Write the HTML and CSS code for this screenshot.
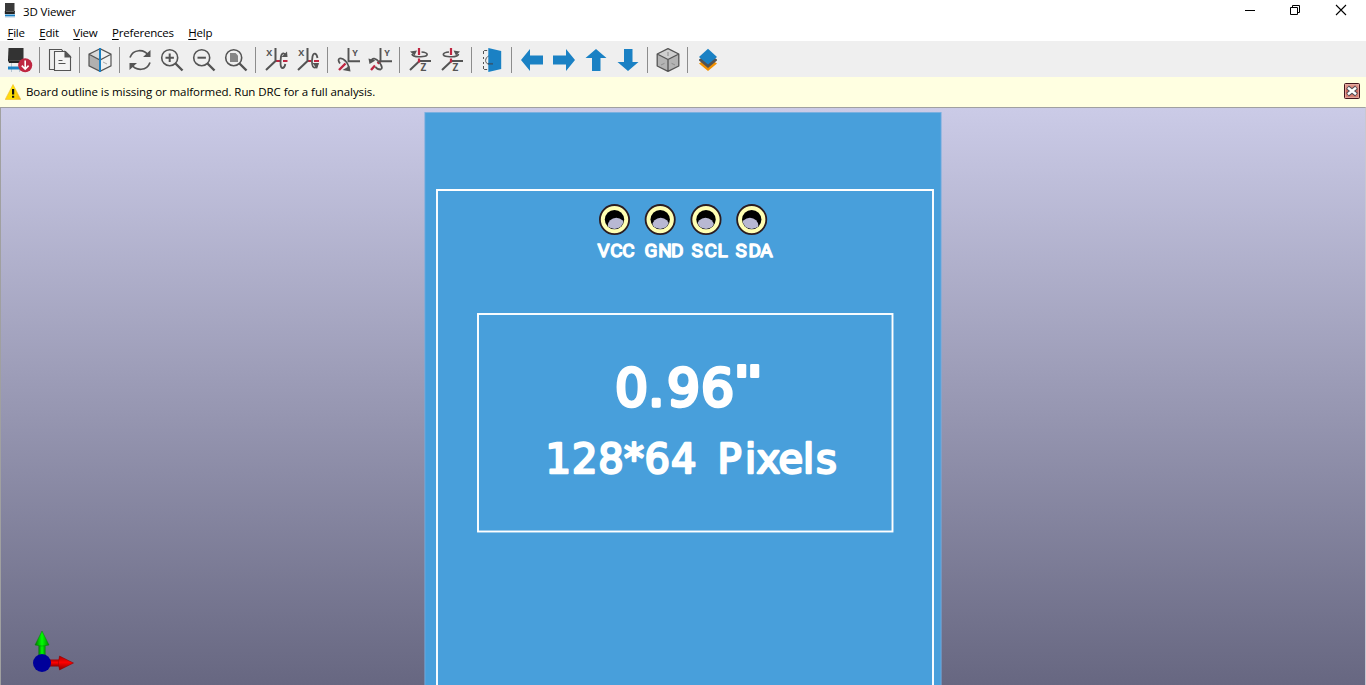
FILE: index.html
```html
<!DOCTYPE html>
<html lang="en">
<head>
<meta charset="utf-8">
<title>3D Viewer</title>
<link rel="stylesheet" href="styles.css">
</head>
<body>
<header class="titlebar">
  <svg class="app-icon" width="12" height="16" viewBox="0 0 12 16"><path d="M1 1h9.500v9H1z" fill="#3a3a3a"/><path d="M.8 9h10v3H.8z" fill="#222"/><path d="M2 9.500h8" stroke="#888" stroke-width=".6"/><path d="M1 12.500h10v2H1z" fill="#1a81c4"/><path d="M1 15h10" stroke="#b9cfe0"/></svg>
  <h1 class="title">3D Viewer</h1>
  <div class="controls">
    <svg width="12" height="12" viewBox="0 0 12 12"><path d="M1 6.500h10" stroke="#000"/></svg>
    <svg width="12" height="12" viewBox="0 0 12 12" fill="none" stroke="#000"><path d="M1.500 3.500h7v7h-7zM3.500 3V1.500h7v7H9"/></svg>
    <svg width="12" height="12" viewBox="0 0 12 12"><path d="M1 1l10 10M11 1L1 11" stroke="#000" stroke-width="1.100"/></svg>
  </div>
</header>
<nav class="menu">
  <span><u>F</u>ile</span><span><u>E</u>dit</span><span><u>V</u>iew</span><span><u>P</u>references</span><span><u>H</u>elp</span>
</nav>
<div class="toolbar">
  <svg class="tool" viewBox="0 0 24 24"><path d="M.5 0h15v11H0z" fill="#333"/><path d="M0 11h16v1.500l-1 2.500H1l-1-2.500z" fill="#222"/><path d="M1 12.200h14" stroke="#777" stroke-width=".7"/><path d="M3.500 15v9M11.500 15v9" stroke="#b7c5d0"/><path d="M0 18.500h16v3H0z" fill="#1a81c4"/><circle cx="17.200" cy="17.200" r="7" fill="#bf2641"/><path d="M17.200 12.500v8M13.800 17.600l3.400 3.600 3.400-3.600" fill="none" stroke="#fff" stroke-width="1.600"/></svg>
  <i class="sep"></i>
  <svg class="tool" viewBox="0 0 24 24" fill="none" stroke="#545454" stroke-width="1.100"><path d="M6.500 21.500h-5v-20h12l2 2.500"/><path d="M6.500 3.500h11l5 5v14h-16z" fill="#f4f4f4"/><path d="M17 3.500v5.500h5.500z" fill="#545454"/><path d="M10.500 12.500h4M10.500 15.500h7" stroke-width="1.200"/></svg>
  <i class="sep"></i>
  <svg class="tool" viewBox="0 0 24 24"><path d="M12 .7L1 6.200v11.600l11 5.500V12z" fill="#b0b0b0"/><path d="M12 .7L1 6.200 12 12z" fill="#d9d9d9"/><path d="M12 .7L23 6.200v11.600l-11 5.500z" fill="#f1f1f1"/><path d="M12 .7L1 6.200v11.600l11 5.500 11-5.500V6.200zM1 6.200L12 12l11-5.800" fill="none" stroke="#545454" stroke-width="1.200"/><path d="M15 14l4 2" stroke="#aaa"/><path d="M12 0v24" stroke="#1a81c4" stroke-width="2"/></svg>
  <i class="sep"></i>
  <svg class="tool" viewBox="0 0 24 24" fill="none" stroke="#545454" stroke-width="1.700"><path d="M2 9.500C5 1 16 .5 21 8M22 14.500C19 23 8 23.500 3 16"/><path d="M22.500 2v7H15z M1.500 22v-7H9z" fill="#545454" stroke="none"/></svg>
  <svg class="tool" viewBox="0 0 24 24" fill="none" stroke="#545454" stroke-width="1.600"><circle cx="9.700" cy="9.700" r="8"/><path d="M15.500 15.500l7 7" stroke-width="2.400"/><path d="M5.500 9.700h8.400M9.700 5.500v8.400" stroke-width="2"/></svg>
  <svg class="tool" viewBox="0 0 24 24" fill="none" stroke="#545454" stroke-width="1.600"><circle cx="9.700" cy="9.700" r="8"/><path d="M15.500 15.500l7 7" stroke-width="2.400"/><path d="M5.500 9.700h8.400" stroke-width="2"/></svg>
  <svg class="tool" viewBox="0 0 24 24" fill="none" stroke="#545454" stroke-width="1.600"><circle cx="9.700" cy="9.700" r="8"/><path d="M15.500 15.500l7 7" stroke-width="2.400"/><path d="M6 5h5.500l2.500 2.500V14H6z" fill="#858585" stroke="none"/></svg>
  <i class="sep"></i>
  <svg class="tool" viewBox="0 0 24 24" fill="none"><path d="M12 13h4M19 13h4.500" stroke="#bf2641" stroke-width="2"/><path d="M11.500 0v13L2 22" stroke="#545454" stroke-width="2"/><path d="M21.500 7.500c-1-3.500-4-2.500-4.500 1-1 7-.5 11.500 1.500 11.500 1.500 0 2.500-2 2.800-4" stroke="#545454" stroke-width="1.800"/><path d="M17.500 9h6L23 3.500z" fill="#545454"/><text class="axis" x="2.300" y="8.300">X</text></svg>
  <svg class="tool" viewBox="0 0 24 24" fill="none"><path d="M12 13h3.500M18 13h5" stroke="#bf2641" stroke-width="2"/><path d="M11.500 0v13L2 22" stroke="#545454" stroke-width="2"/><path d="M21.500 10c-1-5-4-6-5-1.500-1 6-.5 10 1.500 11 2 .5 3-1 3.500-4" stroke="#545454" stroke-width="1.800"/><path d="M16.500 15h6.500l-2 6z" fill="#545454"/><text class="axis" x="2.300" y="8.300">X</text></svg>
  <i class="sep"></i>
  <svg class="tool" viewBox="0 0 24 24" fill="none"><path d="M9.500 15.500L3 22" stroke="#bf2641" stroke-width="2.400"/><path d="M12.500 0v13.200H24" stroke="#545454" stroke-width="1.900"/><path d="M4 15.500C0 10 5 8.500 9.500 13c3.500 4 3.500 7 2 8.500" stroke="#545454" stroke-width="1.800"/><path d="M6.500 22l7-4 1 5.500z" fill="#545454"/><text class="axis" x="16.200" y="8.300">Y</text></svg>
  <svg class="tool" viewBox="0 0 24 24" fill="none"><path d="M12.500 13L9.500 15.500M7 17.500L3 22" stroke="#bf2641" stroke-width="2.400"/><path d="M12.500 0v13.200H24" stroke="#545454" stroke-width="1.900"/><path d="M3 14c1-5 5-4 8.500.5 3 4 3 6.500 1 7-2 0-4-1-5-2.500" stroke="#545454" stroke-width="1.800"/><path d="M.5 10.500l7 2-6 3.500z" fill="#545454"/><text class="axis" x="16.200" y="8.300">Y</text></svg>
  <i class="sep"></i>
  <svg class="tool" viewBox="0 0 24 24" fill="none"><path d="M2 22l9.500-9H23" stroke="#545454" stroke-width="2"/><path d="M11 0v7M11 10.500v4" stroke="#bf2641" stroke-width="2.200"/><path d="M13.500 4c7 .5 7.500 4 1.500 4.500-6 .6-10.500 0-11-2.500" stroke="#545454" stroke-width="1.700"/><path d="M2 3.500L9 2.500 6.500 7.500z" fill="#545454"/><text class="axis z" x="12.500" y="23">Z</text></svg>
  <svg class="tool" viewBox="0 0 24 24" fill="none"><path d="M2 22l9.500-9H23" stroke="#545454" stroke-width="2"/><path d="M11 0v7M11 10.500v4" stroke="#bf2641" stroke-width="2.200"/><path d="M9 4c-7 .5-7.500 4-1.500 4.500 6 .6 10.500 0 11-2.500" stroke="#545454" stroke-width="1.700"/><path d="M20 3.500L13.500 2.500 16 7.500z" fill="#545454"/><text class="axis z" x="12.500" y="23">Z</text></svg>
  <i class="sep"></i>
  <svg class="tool" viewBox="0 0 24 24" fill="none"><path d="M3.500 6V2.500h5M3.500 9v2M3.500 14v2M3.500 18v3.500h4" stroke="#545454" stroke-dasharray="3 1.200"/><path d="M9.500 7.500c-5 2-5 8-1 8.500" stroke="#545454"/><path d="M8.300 0l12.900 3v18L8.300 24z" fill="#1a81c4"/><path d="M8 15.800h5" stroke="#315a78" stroke-width="1.700"/></svg>
  <i class="sep"></i>
  <svg class="tool" viewBox="0 0 24 24"><path d="M1 12L10 1v6.500h13v9H10V23z" fill="#1a81c4"/></svg>
  <svg class="tool" viewBox="0 0 24 24"><path d="M23 12L14 1v6.500H1v9h13V23z" fill="#1a81c4"/></svg>
  <svg class="tool" viewBox="0 0 24 24"><path d="M12 1L1.500 10H8v13h8.500V10h6z" fill="#1a81c4"/></svg>
  <svg class="tool" viewBox="0 0 24 24"><path d="M12 23L1.500 14H8V1h8.500v13h6z" fill="#1a81c4"/></svg>
  <i class="sep"></i>
  <svg class="tool" viewBox="0 0 24 24" stroke-linejoin="round"><path d="M12 .7L1.200 6v12L12 23.300 22.800 18V6z" fill="#b4b4b4"/><path d="M12 .7L1.200 6 12 11.500 22.800 6z" fill="#cfcfcf"/><path d="M12 4v4M5 17l3.500-1.700M19 17l-3.500-1.700" stroke="#8c8c8c"/><path d="M12 .7L1.200 6v12L12 23.300 22.800 18V6zM1.200 6L12 11.500 22.800 6M12 11.500v11.800" fill="none" stroke="#545454" stroke-width="1.300"/></svg>
  <i class="sep"></i>
  <svg class="tool" viewBox="0 0 24 24"><path d="M3 15.500l9-6 9 6-9 7.500z" fill="#f29100"/><path d="M3 11.500l9-6 9 6v1L12 20l-9-7.500z" fill="#545454"/><path d="M12 .7L21 9l-9 7.500L3 9z" fill="#1a81c4"/></svg>
</div>
<div class="banner">
  <svg class="warn" width="16" height="16" viewBox="0 0 16 16"><defs><linearGradient id="wg" x1="0" x2="1"><stop offset="0" stop-color="#ffd21c"/><stop offset=".5" stop-color="#ffe600"/><stop offset="1" stop-color="#f6b112"/></linearGradient></defs><path d="M8 .5L15.800 15.500H.2z" fill="url(#wg)" stroke="#f1bc32" stroke-width=".6"/><path d="M7 5h2.200v5.500H7zM7 11.700h2.200v2.100H7z" fill="#111"/></svg>
  <span class="message">Board outline is missing or malformed. Run DRC for a full analysis.</span>
  <svg class="dismiss" width="16" height="16" viewBox="0 0 16 16"><defs><linearGradient id="cg" x1="0" y1="0" x2="0" y2="1"><stop offset="0" stop-color="#e6a79c"/><stop offset=".5" stop-color="#cf6257"/><stop offset="1" stop-color="#dc8d80"/></linearGradient></defs><rect x=".5" y=".5" width="15" height="15" rx="1" fill="url(#cg)" stroke="#43141c"/><rect x="1.500" y="1.500" width="13" height="13" fill="none" stroke="#e5b0a8" stroke-width=".7"/><path d="M3.500 4.300l9 7.400M12.500 4.300l-9 7.400" stroke="#4b4b55" stroke-width="4.400"/><path d="M4 4.700l8 6.600M12 4.700l-8 6.600" stroke="#fff" stroke-width="2.400"/></svg>
</div>
<main class="viewport">
  <svg class="scene" width="1364" height="577" viewBox="1 108 1364 577">
    <defs>
      <linearGradient id="sky" gradientUnits="userSpaceOnUse" x1="0" y1="108" x2="0" y2="685"><stop offset="0" stop-color="#cbcbe7"/><stop offset="1" stop-color="#676781"/></linearGradient>
      <linearGradient id="rg" x1="0" y1="0" x2="0" y2="1"><stop offset="0" stop-color="#a00"/><stop offset=".45" stop-color="#f00"/><stop offset="1" stop-color="#800"/></linearGradient>
      <linearGradient id="gg"><stop offset="0" stop-color="#070"/><stop offset=".5" stop-color="#0f0"/><stop offset="1" stop-color="#080"/></linearGradient>
      <clipPath id="hole"><circle r="9.300"/></clipPath>
      <g id="pad"><circle r="14.600" fill="#ffffb3" stroke="#2b1c20" stroke-width="1.800"/><circle r="9.700" fill="#000"/></g>
    </defs>
    <rect x="1" y="108" width="1364" height="577" fill="url(#sky)"/>
    <rect x="424.900" y="112.500" width="516.200" height="580" fill="#489fdb" stroke="#78aee0" stroke-width=".8"/>
    <g fill="none" stroke="#fff" stroke-width="1.900"><path d="M437 690V190h496v500"/><rect x="478" y="314" width="414.500" height="217.500"/></g>
    <g transform="translate(614.500 219.600)"><use href="#pad"/><circle cx="1.800" cy="6.800" r="8.700" fill="#b8b8d3" clip-path="url(#hole)"/></g>
    <g transform="translate(660.200 219.600)"><use href="#pad"/><circle cx=".5" cy="6.800" r="8.700" fill="#b8b8d3" clip-path="url(#hole)"/></g>
    <g transform="translate(706 219.600)"><use href="#pad"/><circle cx="-.5" cy="6.800" r="8.700" fill="#b8b8d3" clip-path="url(#hole)"/></g>
    <g transform="translate(751.700 219.600)"><use href="#pad"/><circle cx="-1.800" cy="6.800" r="8.700" fill="#b8b8d3" clip-path="url(#hole)"/></g>
    <g class="silk pins">
      <text y="257" x="597.500 610.300 622.300">VCC</text>
      <text y="257" x="644.500 658.200 671">GND</text>
      <text y="257" x="691.500 704.500 717.500">SCL</text>
      <text y="257" x="735.500 748.500 760.300">SDA</text>
    </g>
    <text class="silk size" y="405.800" x="615 648 667 701">0.96</text>
    <text class="silk quote" transform="translate(732 398) scale(1.600 1)">"</text>
    <text class="silk pixels" y="472.500" x="545.500 572 598.200 624 644.500 671 700 717.500 745 756.500 778.500 803 816">128*64 Pixels</text>
    <path d="M38.500 657v-14h7v14z" fill="url(#gg)"/><path d="M42 631l7 14q-7 2-14 0z" fill="url(#gg)" stroke="#087a08" stroke-width=".5"/>
    <path d="M48 659.500h12v7H48z" fill="url(#rg)"/><path d="M73.500 663L59.500 656q-2 7 0 14z" fill="url(#rg)" stroke="#8b0000" stroke-width=".5"/>
    <circle cx="42" cy="663" r="9" fill="#00009a"/>
  </svg>
</main>
</body>
</html>
```
FILE: styles.css
```css
* { box-sizing: border-box; }
body {
  margin: 0;
  height: 685px;
  overflow: hidden;
  display: flex;
  flex-direction: column;
  background: #fff;
  color: #000;
  font: 11.5px/16px "Open Sans", "Noto Sans", sans-serif;
}
svg { display: block; flex: none; }
.titlebar { height: 24px; display: flex; align-items: flex-start; padding: 3px 19px 0 4px; }
.app-icon { margin-top: -1px; }
.title { margin: 1px 0 0 7px; font-size: 11.5px; line-height: 16px; font-weight: 400; letter-spacing: -0.15px; }
.controls { margin-left: auto; display: flex; gap: 34px; padding-top: 1px; }
.controls svg:nth-child(2) { margin-left: -1px; }
.menu { height: 17px; display: flex; gap: 14.4px; padding: 1px 0 0 7.4px; letter-spacing: -0.2px; }
.menu u { text-underline-offset: 2px; text-decoration-thickness: 1px; text-decoration-skip-ink: none; }
.toolbar { height: 36px; display: flex; align-items: center; padding: 2px 0 0 4px; background: #efefef; }
.tool { width: 24px; height: 24px; margin: 0 4px; overflow: visible; }
.sep { width: 1px; height: 26px; margin: 0 4px 0 3px; background: #8c8c8c; }
.axis { font: bold 9px "Open Sans", sans-serif; fill: #545454; }
.axis.z { font-size: 10px; }
.banner { height: 30px; display: flex; align-items: center; padding: 0 6px 2px 5px; background: #ffffe1; }
.warn { margin-top: 2px; }
.message { margin: 2px 0 0 5px; letter-spacing: -0.07px; }
.dismiss { margin-left: auto; }
.viewport { flex: 1; border: solid #a0a0a0; border-width: 1px 0 0 1px; border-right: 1px solid #c8c8d2; overflow: hidden; }
.silk { fill: #fff; stroke: #fff; stroke-linejoin: round; font-family: "DejaVu Sans", sans-serif; }
.pins { font-family: Roboto, sans-serif; font-size: 19px; stroke-width: 1.4px; }
.size { font-size: 52px; stroke-width: 3.6px; }
.quote { font-size: 44px; stroke-width: 2px; }
.pixels { font-size: 40px; stroke-width: 2.4px; }
```
